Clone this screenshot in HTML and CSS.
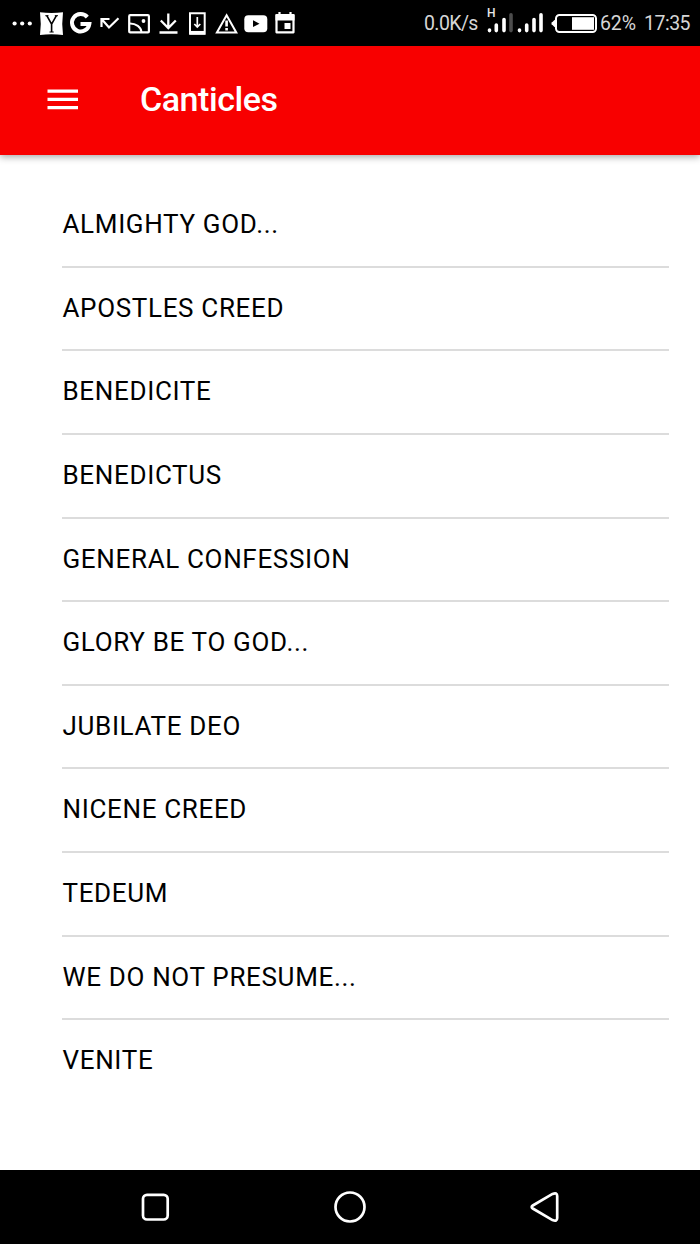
FILE: index.html
```html
<!DOCTYPE html>
<html lang="en">
<head>
<meta charset="utf-8">
<title>Canticles</title>
<link rel="stylesheet" href="styles.css">
</head>
<body>
<div class="screen">
  <div class="status">
    <svg class="notifications" width="300" height="46" viewBox="0 0 300 46" fill="none" stroke="#fff" stroke-width="2.2">
      <g fill="#fff" stroke="none">
        <circle cx="14.6" cy="23.5" r="2.1"/><circle cx="22.2" cy="23.5" r="2.1"/><circle cx="29.8" cy="23.5" r="2.1"/>
        <path d="M40 12.2Q51.500 13.700 63 12.200Q61.500 23.500 63 35Q51.500 33.500 40 35Q41.500 23.500 40 12.200Z"/>
      </g>
      <path d="M46.800 15.700L51.600 24.200L56.400 15.700M51.600 24V32" stroke="#000" stroke-width="1.600"/>
      <path d="M45.300 15.700H48.500M54.800 15.700H58M49.500 32H53.700" stroke="#000" stroke-width="1"/>
      <path d="M87.300 17.100A8.700 8.700 0 1 0 89.300 24.100H80.500" stroke-width="4"/>
      <path d="M101.500 27V19H109.500M102 19.500L109 27.500L118.500 18.300"/>
      <rect x="129.200" y="15.200" width="19.700" height="17.200" rx="1"/>
      <path d="M130 23.500C136 23.500 141 27 141.500 32" stroke-width="1.900"/>
      <circle cx="143.500" cy="21" r="1.900" fill="#fff" stroke="none"/>
      <path d="M168.300 13.500V27.500M160.800 20.500L168.300 28L175.800 20.500M159.500 32.500H177.500" stroke-width="2.300"/>
      <path d="M190 13.300H204.700V33.700H190Z" stroke-width="2"/><path d="M190 32.700H205" stroke-width="3.500"/>
      <path d="M197.300 17V27M194.300 24L197.300 27L200.300 24" stroke-width="1.700"/>
      <path d="M226.600 15.300L236.300 32.500H216.900Z" stroke-width="2"/>
      <path d="M226.600 20.500V26.500M226.600 28V30.500" stroke-width="2.600"/>
      <rect x="244.300" y="15.200" width="23" height="17" rx="4" fill="#fff" stroke="none"/>
      <path d="M253 20.300L259.500 23.700L253 27.100Z" fill="#000" stroke="none"/>
      <path d="M276.500 15H293.500V32.300H276.500Z" stroke-width="2.200" stroke-linejoin="round"/>
      <path d="M275.500 17.500H294.500" stroke-width="6"/><path d="M279.500 12V16M290.500 12V16" stroke-width="2.200"/>
      <path d="M284.500 23H290.500V29H284.500Z" fill="#fff" stroke="none"/>
    </svg>
    <span class="speed">0.0K/s</span>
    <span class="signals">
      <svg width="58" height="46" viewBox="486 0 58 46" stroke="#fff" stroke-width="3.600" stroke-linecap="round">
        <path d="M489.500 30V30.600M496.300 25V30.600M504 19.500V30.600M519.500 30V30.600M526.700 25V30.600M534 19.500V30.600M541 14.800V30.600"/>
        <path d="M511 14.800V30.600" stroke="#4c4c4c"/>
      </svg>
      <span class="network">H</span>
    </span>
    <svg class="battery" width="48" height="46" viewBox="551 0 48 46">
      <path d="M555.500 19.500V27.500C554 27 553.500 25.500 551.500 24.500V22.500C553.500 21.500 554 20 555.500 19.500Z" fill="#fff"/>
      <rect x="556" y="15" width="40" height="17" rx="3.500" fill="#000" stroke="#fff" stroke-width="2"/>
      <path d="M572 17.200H594V29.800H572Z" fill="#fff"/>
    </svg>
    <span class="percent">62%</span>
    <span class="time">17:35</span>
  </div>
  <header class="appbar">
    <svg width="32" height="22" viewBox="0 0 32 22" fill="#fff">
      <path d="M.5 1.500H31V4.800H.5ZM.5 9.700H31V13H.5ZM.5 18H31V21.300H.5Z"/>
    </svg>
    <h1 class="title">Canticles</h1>
  </header>
  <ul class="list">
    <li class="item">ALMIGHTY GOD...</li>
    <li class="item">APOSTLES CREED</li>
    <li class="item">BENEDICITE</li>
    <li class="item">BENEDICTUS</li>
    <li class="item">GENERAL CONFESSION</li>
    <li class="item">GLORY BE TO GOD...</li>
    <li class="item">JUBILATE DEO</li>
    <li class="item">NICENE CREED</li>
    <li class="item">TEDEUM</li>
    <li class="item">WE DO NOT PRESUME...</li>
    <li class="item">VENITE</li>
  </ul>
  <nav class="navbar">
    <svg width="34" height="34" viewBox="0 0 34 34" fill="none" stroke="#fff" stroke-width="2.700">
      <rect x="5" y="4.800" width="24.700" height="24.700" rx="4"/>
    </svg>
    <svg width="34" height="34" viewBox="0 0 34 34" fill="none" stroke="#fff" stroke-width="2.700">
      <circle cx="17" cy="17" r="14.500"/>
    </svg>
    <svg width="34" height="34" viewBox="0 0 34 34" fill="none" stroke="#fff" stroke-width="2.700">
      <path d="M4.800 15.500L24.500 3.900Q29.200 2 29.200 6V28Q29.200 32 24.500 30.100L4.800 18.500Q2.500 17 4.800 15.500Z"/>
    </svg>
  </nav>
</div>
</body>
</html>
```
FILE: styles.css
```css
* { box-sizing: border-box; }
body { margin: 0; background: #fff; font-family: Roboto, "Liberation Sans", sans-serif; }
svg { display: block; flex: none; }
.screen { display: flex; flex-direction: column; width: 700px; height: 1244px; overflow: hidden; }
.status { display: flex; align-items: center; height: 46px; flex: none; background: #000; color: #d6d6d6; font-size: 19.5px; line-height: 46px; white-space: nowrap; }
.speed { width: 62px; margin-left: 124px; padding-top: 2px; letter-spacing: -.6px; }
.signals { position: relative; }
.network { position: absolute; left: 1px; top: 6px; font-size: 12px; font-weight: 500; line-height: 14px; color: #e8e8e8; }
.battery { margin-left: 7px; }
.percent { width: 44px; margin-left: 1px; padding-top: 2px; letter-spacing: -.1px; }
.time { padding-top: 2px; letter-spacing: -.5px; }
.appbar { display: flex; align-items: center; gap: 61px; height: 109px; flex: none; padding: 0 47px 3px; background: #f80000; box-shadow: 0 2px 7px rgba(0, 0, 0, .35); position: relative; }
.title { margin: 0; font-size: 34px; line-height: 40px; font-weight: 500; letter-spacing: -.45px; color: #fff; }
.list { flex: 1; margin: 0; padding: 29.2px 31px 0 62px; list-style: none; }
.item { height: 83.6px; padding-left: .5px; line-height: 80px; font-size: 26px; letter-spacing: .66px; color: #000; background: linear-gradient(#dcdcdc, #dcdcdc) 0 100% / 100% 2px no-repeat; white-space: nowrap; }
.item:last-child { background: none; }
.navbar { display: flex; gap: 161px; height: 74px; flex: none; padding: 20px 0 0 138px; background: #000; }
```
